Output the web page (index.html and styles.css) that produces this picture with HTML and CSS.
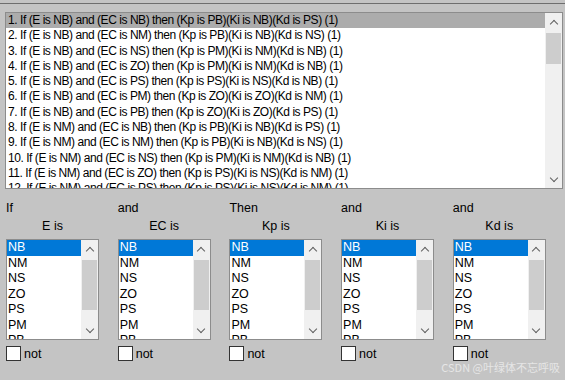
FILE: index.html
```html
<!DOCTYPE html>
<html lang="en">

<head>
    <meta charset="UTF-8">
    <title>Fuzzy Rules</title>
    <link rel="stylesheet" href="styles.css">
</head>

<body>
    <div class="frame">
        <div class="rules">
            <ul class="rule-list">
                <li class="selected">1. If (E is NB) and (EC is NB) then (Kp is PB)(Ki is NB)(Kd is PS) (1)</li>
                <li>2. If (E is NB) and (EC is NM) then (Kp is PB)(Ki is NB)(Kd is NS) (1)</li>
                <li>3. If (E is NB) and (EC is NS) then (Kp is PM)(Ki is NM)(Kd is NB) (1)</li>
                <li>4. If (E is NB) and (EC is ZO) then (Kp is PM)(Ki is NM)(Kd is NB) (1)</li>
                <li>5. If (E is NB) and (EC is PS) then (Kp is PS)(Ki is NS)(Kd is NB) (1)</li>
                <li>6. If (E is NB) and (EC is PM) then (Kp is ZO)(Ki is ZO)(Kd is NM) (1)</li>
                <li>7. If (E is NB) and (EC is PB) then (Kp is ZO)(Ki is ZO)(Kd is PS) (1)</li>
                <li>8. If (E is NM) and (EC is NB) then (Kp is PB)(Ki is NB)(Kd is PS) (1)</li>
                <li>9. If (E is NM) and (EC is NM) then (Kp is PB)(Ki is NB)(Kd is NS) (1)</li>
                <li>10. If (E is NM) and (EC is NS) then (Kp is PM)(Ki is NM)(Kd is NB) (1)</li>
                <li>11. If (E is NM) and (EC is ZO) then (Kp is PS)(Ki is NS)(Kd is NM) (1)</li>
                <li>12. If (E is NM) and (EC is PS) then (Kp is PS)(Ki is NS)(Kd is NM) (1)</li>
            </ul>
            <div class="scrollbar">
                <span class="arrow up"></span>
                <div class="track"><div class="thumb"></div></div>
                <span class="arrow down"></span>
            </div>
        </div>

        <div class="vars">
            <div class="var">
                <div class="conn">If</div>
                <div class="name">E is</div>
                <div class="box">
                    <ul class="terms">
                        <li class="selected">NB</li><li>NM</li><li>NS</li><li>ZO</li><li>PS</li><li>PM</li><li>PB</li>
                    </ul>
                    <div class="scrollbar small">
                        <span class="arrow up"></span>
                        <div class="track"><div class="thumb"></div></div>
                        <span class="arrow down"></span>
                    </div>
                </div>
                <label class="not"><span class="check"></span>not</label>
            </div>
            <div class="var">
                <div class="conn">and</div>
                <div class="name">EC is</div>
                <div class="box">
                    <ul class="terms">
                        <li class="selected">NB</li><li>NM</li><li>NS</li><li>ZO</li><li>PS</li><li>PM</li><li>PB</li>
                    </ul>
                    <div class="scrollbar small">
                        <span class="arrow up"></span>
                        <div class="track"><div class="thumb"></div></div>
                        <span class="arrow down"></span>
                    </div>
                </div>
                <label class="not"><span class="check"></span>not</label>
            </div>
            <div class="var">
                <div class="conn">Then</div>
                <div class="name">Kp is</div>
                <div class="box">
                    <ul class="terms">
                        <li class="selected">NB</li><li>NM</li><li>NS</li><li>ZO</li><li>PS</li><li>PM</li><li>PB</li>
                    </ul>
                    <div class="scrollbar small">
                        <span class="arrow up"></span>
                        <div class="track"><div class="thumb"></div></div>
                        <span class="arrow down"></span>
                    </div>
                </div>
                <label class="not"><span class="check"></span>not</label>
            </div>
            <div class="var">
                <div class="conn">and</div>
                <div class="name">Ki is</div>
                <div class="box">
                    <ul class="terms">
                        <li class="selected">NB</li><li>NM</li><li>NS</li><li>ZO</li><li>PS</li><li>PM</li><li>PB</li>
                    </ul>
                    <div class="scrollbar small">
                        <span class="arrow up"></span>
                        <div class="track"><div class="thumb"></div></div>
                        <span class="arrow down"></span>
                    </div>
                </div>
                <label class="not"><span class="check"></span>not</label>
            </div>
            <div class="var">
                <div class="conn">and</div>
                <div class="name">Kd is</div>
                <div class="box">
                    <ul class="terms">
                        <li class="selected">NB</li><li>NM</li><li>NS</li><li>ZO</li><li>PS</li><li>PM</li><li>PB</li>
                    </ul>
                    <div class="scrollbar small">
                        <span class="arrow up"></span>
                        <div class="track"><div class="thumb"></div></div>
                        <span class="arrow down"></span>
                    </div>
                </div>
                <label class="not"><span class="check"></span>not</label>
            </div>
        </div>

        <div class="watermark">CSDN @叶绿体不忘呼吸</div>
    </div>
</body>

</html>
```

FILE: styles.css
```css
body {
    margin: 0;
    background-color: #c4c4c4;
    color: #000;
    font-family: "Liberation Sans", Arial, sans-serif;
    font-size: 12.5px;
}

.frame {
    position: relative;
    width: 565px;
    height: 380px;
    padding-top: 3px;
    box-sizing: border-box;
}

.frame::before {
    content: "";
    display: block;
    height: 1px;
    background-color: #6e6e6e;
}

.rules {
    display: flex;
    margin: 8px 2px 0 5px;
    height: 175px;
    border: 1px solid #8c8c8c;
    background-color: #fff;
    overflow: hidden;
}

.rule-list {
    flex: 1;
    list-style: none;
    margin: 0;
    padding: 0;
    overflow: hidden;
}

.rule-list li {
    height: 15.3px;
    line-height: 15.3px;
    padding-left: 2px;
    white-space: nowrap;
    font-size: 12px;
    letter-spacing: -0.45px;
}

.rule-list li.selected {
    background-color: #acacac;
}

.scrollbar {
    display: flex;
    flex-direction: column;
    width: 17px;
    background-color: #f0f0f0;
}

.arrow {
    height: 17px;
    display: flex;
    align-items: center;
    justify-content: center;
}

.arrow::after {
    content: "";
    width: 5px;
    height: 5px;
    border-left: 1.5px solid #606060;
    border-top: 1.5px solid #606060;
}

.arrow.up::after {
    transform: translateY(2px) rotate(45deg);
}

.arrow.down::after {
    transform: translateY(-2px) rotate(225deg);
}

.track {
    flex: 1;
    padding: 3px 1px 0;
}

.thumb {
    height: 31px;
    background-color: #cdcdcd;
}

.vars {
    display: grid;
    grid-template-columns: repeat(5, 93px);
    column-gap: 18.7px;
    margin: 12px 0 0 6px;
}

.conn {
    height: 18px;
}

.name {
    text-align: center;
    height: 20px;
}

.box {
    display: flex;
    height: 99px;
    border: 1px solid #8c8c8c;
    background-color: #fff;
    overflow: hidden;
}

.terms {
    flex: 1;
    list-style: none;
    margin: 0;
    padding: 0;
}

.terms li {
    height: 15.5px;
    line-height: 15.5px;
    padding-left: 1px;
}

.terms li.selected {
    background-color: #0078d7;
    color: #fff;
}

.scrollbar.small .thumb {
    height: 50px;
}

.not {
    display: flex;
    align-items: center;
    gap: 3px;
    margin-top: 6px;
}

.check {
    width: 13px;
    height: 13px;
    border: 1px solid #333;
    background-color: #fff;
}

.watermark {
    position: absolute;
    right: 5px;
    bottom: 5px;
    color: #e6e6e6;
    font-family: "Noto Sans CJK SC", sans-serif;
    font-size: 11px;
}
```
